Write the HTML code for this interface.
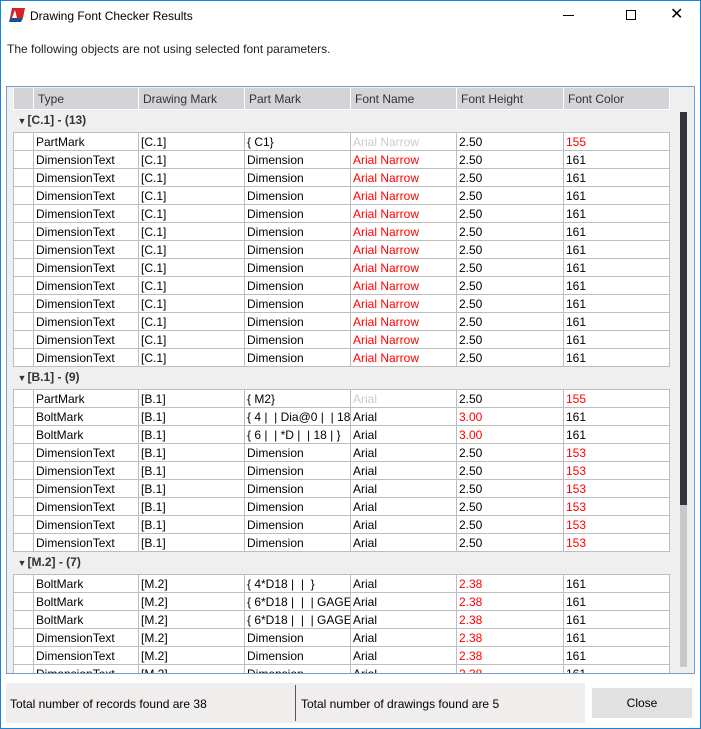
<!DOCTYPE html>
<html><head><meta charset="utf-8"><style>
*{margin:0;padding:0;box-sizing:border-box}
body{width:701px;height:729px;background:#fff;font-family:"Liberation Sans",sans-serif;font-size:12px;color:#000;position:relative;overflow:hidden}
.win{position:absolute;left:0;top:0;width:701px;height:729px;border:1px solid #1883d7}
.title{position:absolute;left:30px;top:9px;font-size:12px}
.sub{position:absolute;left:7px;top:42px;font-size:12px;color:#222}
.grid{position:absolute;left:6px;top:86px;width:689px;height:588px;border:1px solid #7a9cc4;background:#efefef;overflow:hidden}
table{position:absolute;left:6px;top:1px;border-collapse:collapse;table-layout:fixed;width:656px}
td{height:18px;border:1px solid #bdbdbd;background:#fff;padding:1px 2px 0 2px;white-space:nowrap;overflow:hidden;font-size:12px;line-height:16px}
tr.h td{height:21px;background:#d4d4d8;border:1px solid #fff;border-top:none;color:#333;padding-left:4px}
tr.g td{height:23px;background:#efefef;border:none;font-weight:bold;color:#333;padding:2px 0 0 4px;vertical-align:top}
.a{font-size:9px;display:inline-block;width:10px}
td.r{color:#f00}td.l{color:#ccc}
.sb{position:absolute;left:670px;top:0;width:17px;height:586px;background:#efefef}
.th{position:absolute;left:3px;top:25px;width:7px;height:393px;background:#33333d}
.tr2{position:absolute;left:3px;top:418px;width:7px;height:162px;background:#c8c8c8}
.st{position:absolute;left:6px;top:683px;width:579px;height:40px;background:#f0eded}
.cl{position:absolute;left:592px;top:688px;width:100px;height:30px;background:#e1e1e1;text-align:center;line-height:30px}
</style></head><body>
<div class="win"></div>
<svg style="position:absolute;left:9px;top:7px" width="18" height="16"><path d="M3 1h13l-2 10H1z" fill="#d42027"/><path d="M1 11h13l-2 4H0z" fill="#1c4f8f"/><path d="M3 11l3-8 2 8z" fill="#fff"/></svg>
<div class="title">Drawing Font Checker Results</div>
<div style="position:absolute;left:563px;top:15px;width:11px;height:1px;background:#000"></div>
<div style="position:absolute;left:626px;top:10px;width:10px;height:10px;border:1px solid #000"></div>
<div style="position:absolute;left:670px;top:4px;font-size:16px">✕</div>
<div class="sub">The following objects are not using selected font parameters.</div>
<div class="grid">
<table>
<colgroup><col style="width:20px"><col style="width:105px"><col style="width:106px"><col style="width:106px"><col style="width:106px"><col style="width:107px"><col style="width:106px"></colgroup>
<tr class="h"><td></td><td>Type</td><td>Drawing Mark</td><td>Part Mark</td><td>Font Name</td><td>Font Height</td><td>Font Color</td></tr>
<tr class="g"><td colspan="7"><span class="a">▼</span>[C.1] - (13)</td></tr>
<tr><td></td><td>PartMark</td><td>[C.1]</td><td>{ C1}</td><td class="l">Arial Narrow</td><td>2.50</td><td class="r">155</td></tr>
<tr><td></td><td>DimensionText</td><td>[C.1]</td><td>Dimension</td><td class="r">Arial Narrow</td><td>2.50</td><td>161</td></tr>
<tr><td></td><td>DimensionText</td><td>[C.1]</td><td>Dimension</td><td class="r">Arial Narrow</td><td>2.50</td><td>161</td></tr>
<tr><td></td><td>DimensionText</td><td>[C.1]</td><td>Dimension</td><td class="r">Arial Narrow</td><td>2.50</td><td>161</td></tr>
<tr><td></td><td>DimensionText</td><td>[C.1]</td><td>Dimension</td><td class="r">Arial Narrow</td><td>2.50</td><td>161</td></tr>
<tr><td></td><td>DimensionText</td><td>[C.1]</td><td>Dimension</td><td class="r">Arial Narrow</td><td>2.50</td><td>161</td></tr>
<tr><td></td><td>DimensionText</td><td>[C.1]</td><td>Dimension</td><td class="r">Arial Narrow</td><td>2.50</td><td>161</td></tr>
<tr><td></td><td>DimensionText</td><td>[C.1]</td><td>Dimension</td><td class="r">Arial Narrow</td><td>2.50</td><td>161</td></tr>
<tr><td></td><td>DimensionText</td><td>[C.1]</td><td>Dimension</td><td class="r">Arial Narrow</td><td>2.50</td><td>161</td></tr>
<tr><td></td><td>DimensionText</td><td>[C.1]</td><td>Dimension</td><td class="r">Arial Narrow</td><td>2.50</td><td>161</td></tr>
<tr><td></td><td>DimensionText</td><td>[C.1]</td><td>Dimension</td><td class="r">Arial Narrow</td><td>2.50</td><td>161</td></tr>
<tr><td></td><td>DimensionText</td><td>[C.1]</td><td>Dimension</td><td class="r">Arial Narrow</td><td>2.50</td><td>161</td></tr>
<tr><td></td><td>DimensionText</td><td>[C.1]</td><td>Dimension</td><td class="r">Arial Narrow</td><td>2.50</td><td>161</td></tr>
<tr class="g"><td colspan="7"><span class="a">▼</span>[B.1] - (9)</td></tr>
<tr><td></td><td>PartMark</td><td>[B.1]</td><td>{ M2}</td><td class="l">Arial</td><td>2.50</td><td class="r">155</td></tr>
<tr><td></td><td>BoltMark</td><td>[B.1]</td><td>{ 4 |&nbsp; | Dia@0 |&nbsp; | 18</td><td>Arial</td><td class="r">3.00</td><td>161</td></tr>
<tr><td></td><td>BoltMark</td><td>[B.1]</td><td>{ 6 |&nbsp; | *D |&nbsp; | 18 | }</td><td>Arial</td><td class="r">3.00</td><td>161</td></tr>
<tr><td></td><td>DimensionText</td><td>[B.1]</td><td>Dimension</td><td>Arial</td><td>2.50</td><td class="r">153</td></tr>
<tr><td></td><td>DimensionText</td><td>[B.1]</td><td>Dimension</td><td>Arial</td><td>2.50</td><td class="r">153</td></tr>
<tr><td></td><td>DimensionText</td><td>[B.1]</td><td>Dimension</td><td>Arial</td><td>2.50</td><td class="r">153</td></tr>
<tr><td></td><td>DimensionText</td><td>[B.1]</td><td>Dimension</td><td>Arial</td><td>2.50</td><td class="r">153</td></tr>
<tr><td></td><td>DimensionText</td><td>[B.1]</td><td>Dimension</td><td>Arial</td><td>2.50</td><td class="r">153</td></tr>
<tr><td></td><td>DimensionText</td><td>[B.1]</td><td>Dimension</td><td>Arial</td><td>2.50</td><td class="r">153</td></tr>
<tr class="g"><td colspan="7"><span class="a">▼</span>[M.2] - (7)</td></tr>
<tr><td></td><td>BoltMark</td><td>[M.2]</td><td>{ 4*D18 |&nbsp; |&nbsp; }</td><td>Arial</td><td class="r">2.38</td><td>161</td></tr>
<tr><td></td><td>BoltMark</td><td>[M.2]</td><td>{ 6*D18 |&nbsp; |&nbsp; | GAGE</td><td>Arial</td><td class="r">2.38</td><td>161</td></tr>
<tr><td></td><td>BoltMark</td><td>[M.2]</td><td>{ 6*D18 |&nbsp; |&nbsp; | GAGE</td><td>Arial</td><td class="r">2.38</td><td>161</td></tr>
<tr><td></td><td>DimensionText</td><td>[M.2]</td><td>Dimension</td><td>Arial</td><td class="r">2.38</td><td>161</td></tr>
<tr><td></td><td>DimensionText</td><td>[M.2]</td><td>Dimension</td><td>Arial</td><td class="r">2.38</td><td>161</td></tr>
<tr><td></td><td>DimensionText</td><td>[M.2]</td><td>Dimension</td><td>Arial</td><td class="r">2.38</td><td>161</td></tr>
</table>
<div class="sb"><div class="th"></div><div class="tr2"></div></div>
</div>
<div class="st"><div style="position:absolute;left:4px;top:14px">Total number of records found are 38</div><div style="position:absolute;left:289px;top:2px;width:1px;height:36px;background:#555"></div><div style="position:absolute;left:295px;top:14px">Total number of drawings found are 5</div></div>
<div class="cl">Close</div>
</body></html>
